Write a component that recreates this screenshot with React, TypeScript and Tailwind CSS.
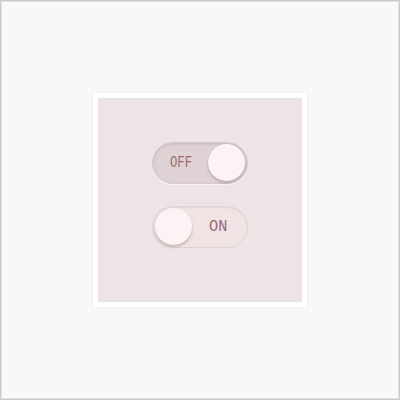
export default function App() {
  const font = { fontFamily: '"Liberation Mono", monospace' };
  return (
    <div className="w-[400px] h-[400px] bg-[#c9c9c9] p-[1px]">
      <div className="w-full h-full bg-[#e2e2e2] p-[1px]">
        <div className="w-full h-full bg-[#f9f8f8] flex items-center justify-center">
          <div className="ml-[-1px] mt-[-1px] p-[5px] bg-white shadow-[0_0_2px_rgba(0,0,0,0.08)]">
            <div className="w-[204px] h-[204px] bg-[#efe4e5] flex flex-col items-center justify-center gap-[22px] pb-[10px] shadow-[inset_0_0_1px_rgba(0,0,0,0.15)]">
              <div className="w-[96px] h-[42px] rounded-full bg-[#dfd2d4] shadow-[inset_0_1px_3px_rgba(0,0,0,0.12),0_1px_0_rgba(255,255,255,0.6)] border border-[#d8cacc] flex items-center justify-between pl-[17px] pr-[2px]">
                <span className="inline-block origin-left scale-x-[0.72] text-[17px] leading-none text-[#9a6a72] w-[23px]" style={font}>OFF</span>
                <div className="w-[37px] h-[37px] rounded-full bg-[#fbf3f4] shadow-[0_2px_3px_rgba(120,90,95,0.35)]" />
              </div>
              <div className="w-[96px] h-[42px] rounded-full bg-[#efe3e4] shadow-[inset_0_1px_2px_rgba(0,0,0,0.06)] border border-[#e0d3d5] flex items-center justify-between pl-[2px] pr-[19px]">
                <div className="w-[37px] h-[37px] rounded-full bg-[#fbf3f4] shadow-[0_2px_3px_rgba(120,90,95,0.35)]" />
                <span className="inline-block origin-right scale-x-[0.9] text-[17px] leading-none text-[#9a6a72] whitespace-nowrap" style={font}>ON</span>
              </div>
            </div>
          </div>
        </div>
      </div>
    </div>
  );
}
